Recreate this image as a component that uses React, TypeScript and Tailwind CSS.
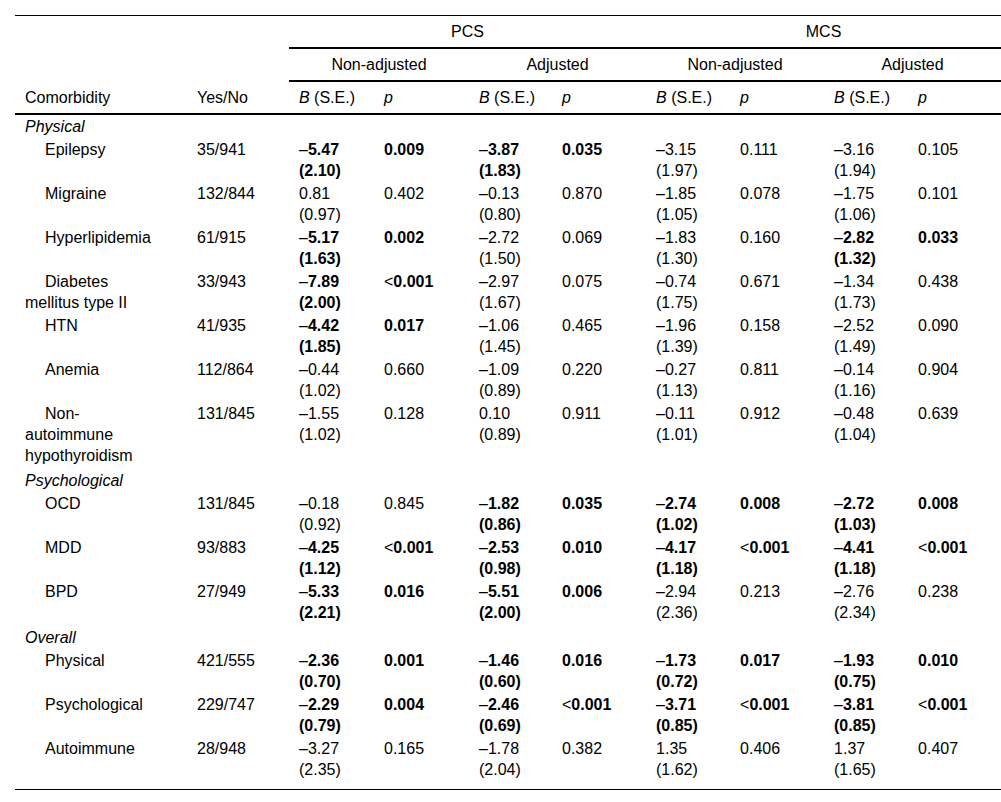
import React from 'react';

type Stat = [string, string, string, boolean?];

type Row = {
  name: string;
  yn: string;
  stats: [Stat, Stat, Stat, Stat];
};

type Group = {
  title: string;
  rows: Row[];
};

const groups: Group[] = [
  {
    title: 'Physical',
    rows: [
      {
        name: 'Epilepsy',
        yn: '35/941',
        stats: [
          ['–5.47', '(2.10)', '0.009', true],
          ['–3.87', '(1.83)', '0.035', true],
          ['–3.15', '(1.97)', '0.111'],
          ['–3.16', '(1.94)', '0.105'],
        ],
      },
      {
        name: 'Migraine',
        yn: '132/844',
        stats: [
          ['0.81', '(0.97)', '0.402'],
          ['–0.13', '(0.80)', '0.870'],
          ['–1.85', '(1.05)', '0.078'],
          ['–1.75', '(1.06)', '0.101'],
        ],
      },
      {
        name: 'Hyperlipidemia',
        yn: '61/915',
        stats: [
          ['–5.17', '(1.63)', '0.002', true],
          ['–2.72', '(1.50)', '0.069'],
          ['–1.83', '(1.30)', '0.160'],
          ['–2.82', '(1.32)', '0.033', true],
        ],
      },
      {
        name: 'Diabetes mellitus type II',
        yn: '33/943',
        stats: [
          ['–7.89', '(2.00)', '<0.001', true],
          ['–2.97', '(1.67)', '0.075'],
          ['–0.74', '(1.75)', '0.671'],
          ['–1.34', '(1.73)', '0.438'],
        ],
      },
      {
        name: 'HTN',
        yn: '41/935',
        stats: [
          ['–4.42', '(1.85)', '0.017', true],
          ['–1.06', '(1.45)', '0.465'],
          ['–1.96', '(1.39)', '0.158'],
          ['–2.52', '(1.49)', '0.090'],
        ],
      },
      {
        name: 'Anemia',
        yn: '112/864',
        stats: [
          ['–0.44', '(1.02)', '0.660'],
          ['–1.09', '(0.89)', '0.220'],
          ['–0.27', '(1.13)', '0.811'],
          ['–0.14', '(1.16)', '0.904'],
        ],
      },
      {
        name: 'Non-autoimmune hypothyroidism',
        yn: '131/845',
        stats: [
          ['–1.55', '(1.02)', '0.128'],
          ['0.10', '(0.89)', '0.911'],
          ['–0.11', '(1.01)', '0.912'],
          ['–0.48', '(1.04)', '0.639'],
        ],
      },
    ],
  },
  {
    title: 'Psychological',
    rows: [
      {
        name: 'OCD',
        yn: '131/845',
        stats: [
          ['–0.18', '(0.92)', '0.845'],
          ['–1.82', '(0.86)', '0.035', true],
          ['–2.74', '(1.02)', '0.008', true],
          ['–2.72', '(1.03)', '0.008', true],
        ],
      },
      {
        name: 'MDD',
        yn: '93/883',
        stats: [
          ['–4.25', '(1.12)', '<0.001', true],
          ['–2.53', '(0.98)', '0.010', true],
          ['–4.17', '(1.18)', '<0.001', true],
          ['–4.41', '(1.18)', '<0.001', true],
        ],
      },
      {
        name: 'BPD',
        yn: '27/949',
        stats: [
          ['–5.33', '(2.21)', '0.016', true],
          ['–5.51', '(2.00)', '0.006', true],
          ['–2.94', '(2.36)', '0.213'],
          ['–2.76', '(2.34)', '0.238'],
        ],
      },
    ],
  },
  {
    title: 'Overall',
    rows: [
      {
        name: 'Physical',
        yn: '421/555',
        stats: [
          ['–2.36', '(0.70)', '0.001', true],
          ['–1.46', '(0.60)', '0.016', true],
          ['–1.73', '(0.72)', '0.017', true],
          ['–1.93', '(0.75)', '0.010', true],
        ],
      },
      {
        name: 'Psychological',
        yn: '229/747',
        stats: [
          ['–2.29', '(0.79)', '0.004', true],
          ['–2.46', '(0.69)', '<0.001', true],
          ['–3.71', '(0.85)', '<0.001', true],
          ['–3.81', '(0.85)', '<0.001', true],
        ],
      },
      {
        name: 'Autoimmune',
        yn: '28/948',
        stats: [
          ['–3.27', '(2.35)', '0.165'],
          ['–1.78', '(2.04)', '0.382'],
          ['1.35', '(1.62)', '0.406'],
          ['1.37', '(1.65)', '0.407'],
        ],
      },
    ],
  },
];

const colWidths = [172, 102, 85, 95, 83, 94, 84, 94, 84, 93];

// leading dash / "<" stays regular weight, digits go bold
const Val: React.FC<{ text: string; bold?: boolean }> = ({ text, bold }) => {
  if (!bold) return <>{text}</>;
  if (text.startsWith('–') || text.startsWith('<')) {
    return (
      <>
        {text[0]}
        <b className="font-bold">{text.slice(1)}</b>
      </>
    );
  }
  return <b className="font-bold">{text}</b>;
};

const App: React.FC = () => {
  const lastGroup = groups[groups.length - 1];
  const lastRow = lastGroup.rows[lastGroup.rows.length - 1];
  const th = 'font-normal border-black px-0 py-[5px]';

  return (
    <div className="min-h-screen bg-white pt-[15px] pl-[15px] font-['Liberation_Sans',Arial,sans-serif] text-[16px] leading-[21px] text-black">
      <table className="w-[986px] table-fixed border-separate border-spacing-0">
        <colgroup>
          {colWidths.map((w, i) => (
            <col key={i} style={{ width: w }} />
          ))}
        </colgroup>
        <thead>
          <tr>
            <th rowSpan={3} className={`${th} border-t border-b-2 pl-[10px] text-left align-bottom`}>
              Comorbidity
            </th>
            <th rowSpan={3} className={`${th} border-t border-b-2 pl-[10px] text-left align-bottom`}>
              Yes/No
            </th>
            <th colSpan={4} className={`${th} border-t border-b-2 text-center align-middle`}>
              PCS
            </th>
            <th colSpan={4} className={`${th} border-t border-b-2 text-center align-middle`}>
              MCS
            </th>
          </tr>
          <tr>
            {['Non-adjusted', 'Adjusted', 'Non-adjusted', 'Adjusted'].map((t, i) => (
              <th key={i} colSpan={2} className={`${th} border-b-2 text-center align-middle`}>
                {t}
              </th>
            ))}
          </tr>
          <tr>
            {[0, 1, 2, 3].map(i => (
              <React.Fragment key={i}>
                <th className={`${th} border-b-2 pl-[10px] text-left align-middle`}>
                  <i>B</i> (S.E.)
                </th>
                <th className={`${th} border-b-2 pl-[10px] text-left align-middle`}>
                  <i>p</i>
                </th>
              </React.Fragment>
            ))}
          </tr>
        </thead>
        <tbody>
          {groups.map((group, gi) => (
            <React.Fragment key={group.title}>
              <tr>
                <td colSpan={10} className={`pl-[10px] pb-[1px] italic ${gi === 0 ? 'pt-[1px]' : 'pt-[3px]'}`}>
                  {group.title}
                </td>
              </tr>
              {group.rows.map(row => {
                const last = row === lastRow;
                const td = `pl-[10px] pt-[1px] align-top ${last ? 'pb-[9px] border-b border-black' : 'pb-[1px]'}`;
                return (
                  <tr key={row.name}>
                    <td className={`${td} pr-[37px] indent-5`}>{row.name}</td>
                    <td className={td}>{row.yn}</td>
                    {row.stats.map((s, i) => (
                      <React.Fragment key={i}>
                        <td className={td}>
                          <span className="block">
                            <Val text={s[0]} bold={s[3]} />
                          </span>
                          <span className="block">
                            <Val text={s[1]} bold={s[3]} />
                          </span>
                        </td>
                        <td className={td}>
                          <Val text={s[2]} bold={s[3]} />
                        </td>
                      </React.Fragment>
                    ))}
                  </tr>
                );
              })}
            </React.Fragment>
          ))}
        </tbody>
      </table>
    </div>
  );
};

export default App;
